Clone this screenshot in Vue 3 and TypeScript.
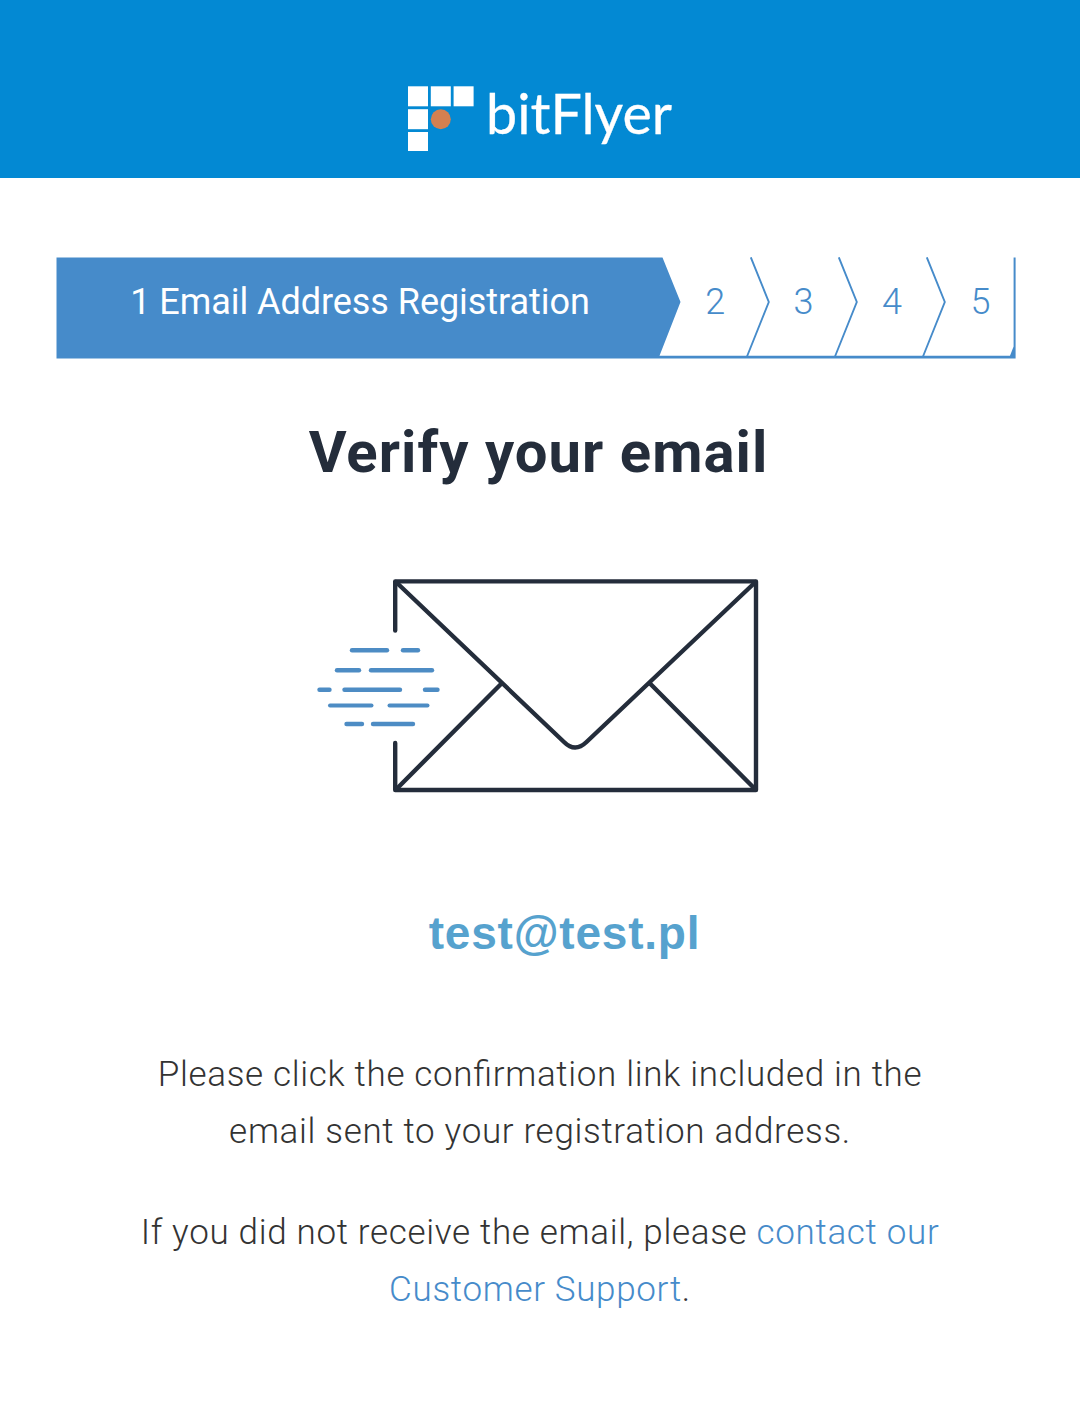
<script setup lang="ts">
interface Dash {
  x1: number
  x2: number
  y: number
  w: number
}

const remainingSteps: number[] = [2, 3, 4, 5]
const chevronOffsets: number[] = [0, 88, 176]

const dashes: Dash[] = [
  { x1: 352, x2: 387, y: 650.3, w: 4.4 },
  { x1: 403, x2: 418, y: 650.3, w: 4.4 },
  { x1: 337, x2: 359, y: 670.3, w: 4.4 },
  { x1: 371, x2: 432, y: 670.3, w: 4.4 },
  { x1: 319.5, x2: 329.5, y: 689.7, w: 4.4 },
  { x1: 344.5, x2: 400, y: 689.7, w: 4.4 },
  { x1: 425, x2: 437.5, y: 689.7, w: 4.4 },
  { x1: 330, x2: 371.5, y: 705.5, w: 4 },
  { x1: 389.5, x2: 427.5, y: 705.5, w: 4 },
  { x1: 346.5, x2: 362, y: 724, w: 4.4 },
  { x1: 373, x2: 413, y: 724, w: 4.4 },
]
</script>

<template>
  <div class="page">
    <header class="header">
      <svg class="logo" width="270" height="76" viewBox="404 82 270 76" role="img" aria-label="bitFlyer">
        <g fill="#fff">
          <rect x="408" y="86.3" width="20" height="20" />
          <rect x="430.8" y="86.3" width="20" height="20" />
          <rect x="453.6" y="86.3" width="20" height="20" />
          <rect x="408" y="109.2" width="20" height="20" />
          <rect x="408" y="132" width="20" height="19" />
        </g>
        <circle cx="440.8" cy="119.3" r="10" fill="#d58050" />
        <text class="wordmark" x="486" y="134" textLength="186" lengthAdjust="spacingAndGlyphs">bitFlyer</text>
      </svg>
    </header>

    <main class="content">
      <nav class="stepper">
        <svg class="stepper-shape" width="960" height="102" viewBox="56 257 960 102" aria-hidden="true">
          <path d="M56.5 257.5H662.5L680.5 302L659.5 355.8H1010L1013.6 346.5V257.5H1015.6V358.5H56.5Z" fill="#468bca" />
          <path
            v-for="dx in chevronOffsets"
            :key="dx"
            :transform="`translate(${dx} 0)`"
            d="M750.8 257.3L768.8 302L747 356.5"
            fill="none"
            stroke="#468bca"
            stroke-width="1.9"
          />
        </svg>
        <span class="step current">1 Email Address Registration</span>
        <span v-for="n in remainingSteps" :key="n" class="step">{{ n }}</span>
      </nav>

      <h1 class="title">Verify your email</h1>

      <svg class="envelope" width="450" height="220" viewBox="313 576 450 220" aria-hidden="true">
        <g fill="none" stroke="#242d3b" stroke-width="4.4" stroke-linecap="round" stroke-linejoin="round">
          <path d="M395.2 630.5V581.4H756V790H395.2V743" />
          <path d="M396 582L564 742Q575 753 586.5 742L755.5 582" />
          <path d="M396.5 789L501 684M650.5 684L755 789" />
        </g>
        <g stroke="#4d8cc4" stroke-linecap="round">
          <line v-for="(d, i) in dashes" :key="i" :x1="d.x1" :x2="d.x2" :y1="d.y" :y2="d.y" :stroke-width="d.w" />
        </g>
      </svg>

      <p class="address">test@test.pl</p>

      <p class="note">
        Please click the confirmation link included in the<br />email sent to your registration address.
      </p>
      <p class="note">
        If you did not receive the email, please <a class="link">contact our<br />Customer Support</a>.
      </p>
    </main>
  </div>
</template>

<style>
body {
  margin: 0;
  background: #fff;
}
</style>

<style scoped>
.page {
  width: 1080px;
  height: 1404px;
  overflow: hidden;
  background: #fff;
  font-family: Roboto, "Liberation Sans", sans-serif;
}

.header {
  display: flex;
  justify-content: center;
  box-sizing: border-box;
  height: 178px;
  padding-top: 82px;
  padding-right: 2px;
  background: #0389d3;
}

.logo {
  display: block;
  overflow: visible;
}

.wordmark {
  font-family: Lato, sans-serif;
  font-size: 57px;
  font-weight: 400;
  fill: #fff;
  stroke: #fff;
  stroke-width: 0.3;
}

.content {
  display: flex;
  flex-direction: column;
  align-items: center;
}

.stepper {
  position: relative;
  display: grid;
  grid-template-columns: 615px repeat(4, 88.4px);
  box-sizing: border-box;
  width: 960px;
  height: 102px;
  margin: 79px 8px 0 0;
}

.stepper-shape {
  position: absolute;
  inset: 0;
}

.step {
  position: relative;
  padding-top: 24px;
  font-size: 36px;
  font-weight: 300;
  line-height: 42px;
  text-align: center;
  color: #468bca;
}

.step.current {
  padding-right: 7px;
  font-weight: 400;
  letter-spacing: -0.05px;
  color: #fff;
}

.title {
  margin: 58px 0 0;
  padding-right: 3px;
  font-size: 58px;
  font-weight: 700;
  line-height: 70px;
  letter-spacing: 1.05px;
  color: #242d3b;
}

.envelope {
  display: block;
  margin: 89px 4px 0 0;
}

.address {
  margin: 111px 0 0;
  padding-left: 49px;
  font-family: "Liberation Sans", sans-serif;
  font-size: 46px;
  font-weight: 700;
  line-height: 52px;
  letter-spacing: 0.8px;
  color: #56a2ce;
}

.note {
  margin: 87px 0 0;
  font-size: 35px;
  font-weight: 300;
  line-height: 57px;
  letter-spacing: 0.67px;
  font-feature-settings: "liga" 1;
  text-align: center;
  white-space: nowrap;
  color: #333;
}

.note + .note {
  margin-top: 44px;
}

.link {
  color: #468bca;
}
</style>
